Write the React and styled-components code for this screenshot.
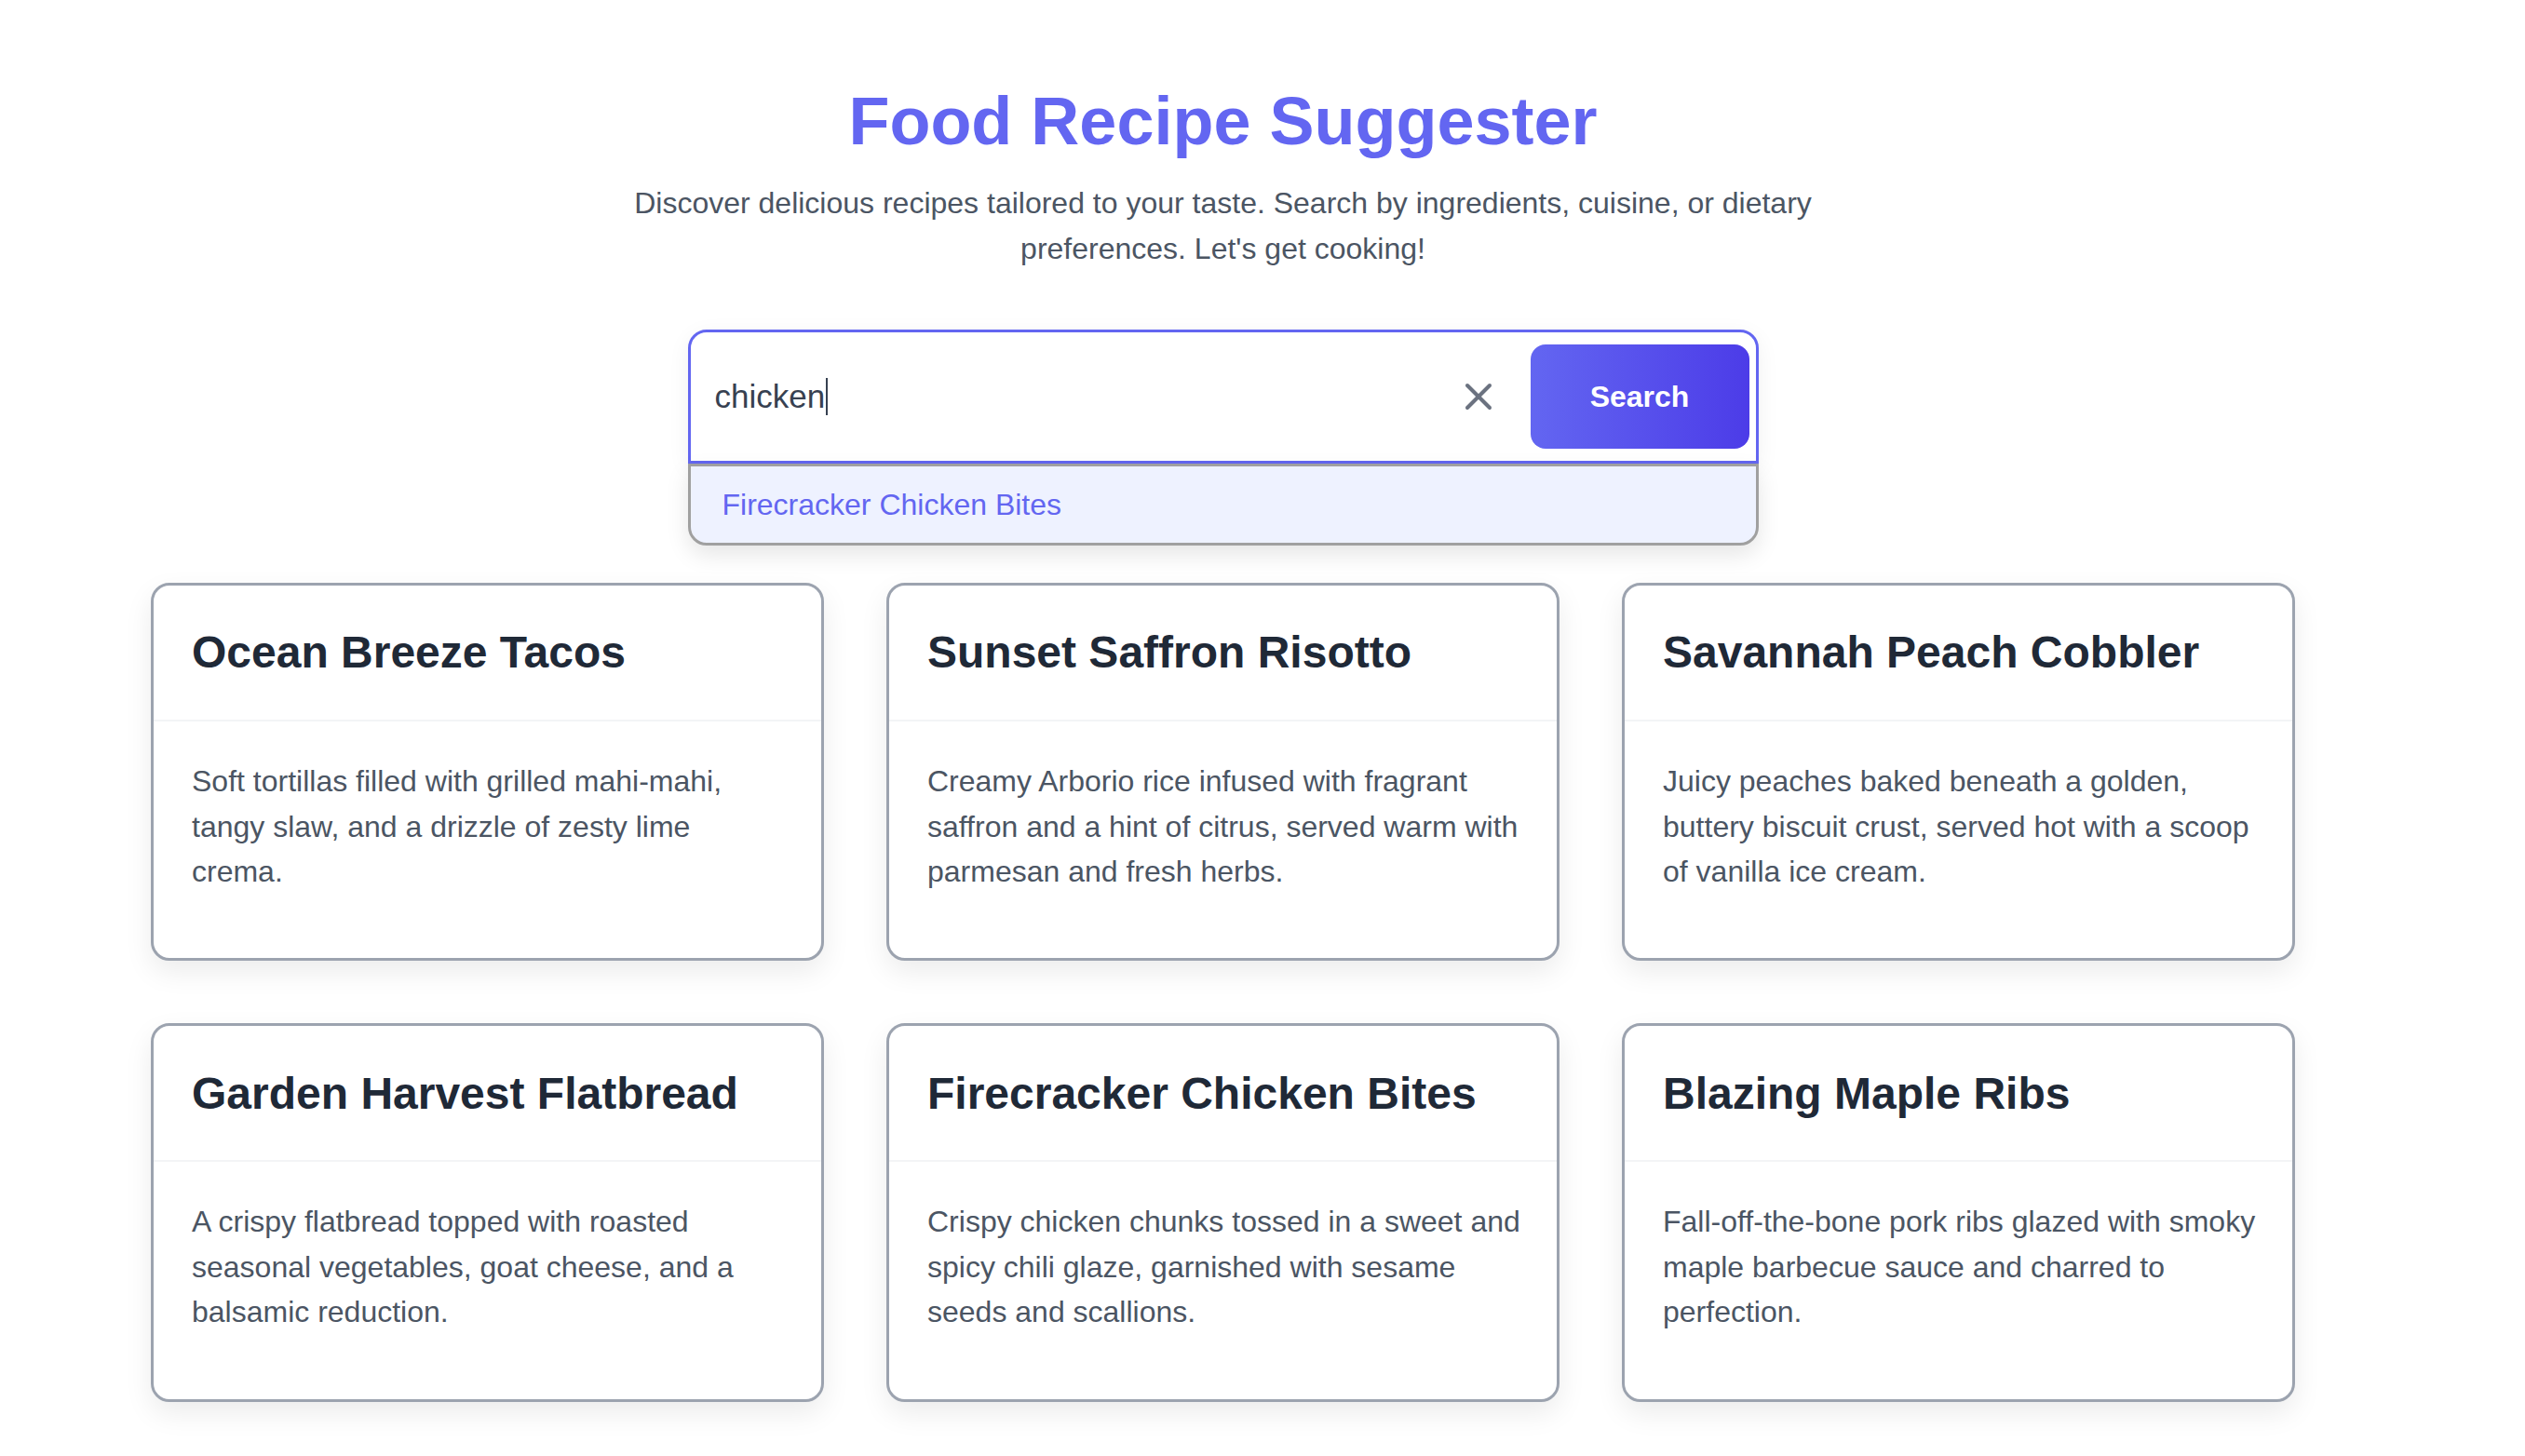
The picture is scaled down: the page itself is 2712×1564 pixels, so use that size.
import { useState } from 'react';
import styled, { createGlobalStyle } from 'styled-components';
import { X } from 'lucide-react';

const GlobalStyle = createGlobalStyle`
  * { box-sizing: border-box; }
  body {
    margin: 0;
    background: #ffffff;
    font-family: "Liberation Sans", Arial, Helvetica, sans-serif;
  }
`;

const Page = styled.main`
  max-width: 2627px;
  display: flex;
  flex-direction: column;
  align-items: center;
  padding: 87px 0 60px;
`;

const Title = styled.h1`
  margin: 0;
  font-size: 72px;
  line-height: 1.2;
  font-weight: 700;
  color: #6366f1;
  text-align: center;
`;

const Subtitle = styled.p`
  margin: 21px 0 0;
  max-width: 1300px;
  font-size: 32px;
  line-height: 48.4px;
  color: #4b5563;
  text-align: center;
`;

const SearchWrap = styled.div`
  position: relative;
  width: 1150px;
  margin: 63px 0 128px;
`;

const SearchBox = styled.div`
  display: flex;
  align-items: center;
  height: 144px;
  padding: 13px 7px 13px 26px;
  border: 3px solid #6366f1;
  border-radius: ${(p) => (p.$open ? '20px 20px 0 0' : '20px')};
  background: #ffffff;
  box-shadow: 0 6px 24px rgba(0, 0, 0, 0.06);
`;

const Field = styled.label`
  position: relative;
  flex: 1;
  min-width: 0;
  display: flex;
  align-items: center;
  height: 60px;
  cursor: text;
`;

const Input = styled.input`
  position: absolute;
  inset: 0;
  width: 100%;
  border: none;
  outline: none;
  background: transparent;
  font-family: inherit;
  font-size: 35px;
  color: transparent;
  caret-color: transparent;
  padding: 0;
`;

const Typed = styled.span`
  font-size: 35px;
  color: #374151;
  white-space: pre;
  pointer-events: none;
`;

const Caret = styled.span`
  display: inline-block;
  width: 2px;
  height: 40px;
  margin-left: 1px;
  background: #374151;
  pointer-events: none;
`;

const ClearButton = styled.button`
  display: flex;
  align-items: center;
  justify-content: center;
  padding: 0;
  margin-right: 32px;
  border: none;
  background: none;
  color: #6b7280;
  cursor: pointer;
`;

const SearchButton = styled.button`
  width: 235px;
  height: 112px;
  border: none;
  border-radius: 16px;
  background: linear-gradient(90deg, #6366f1 0%, #4c3ce8 100%);
  color: #ffffff;
  font-family: inherit;
  font-size: 32px;
  font-weight: 700;
  cursor: pointer;
`;

const Suggestions = styled.ul`
  position: absolute;
  top: 100%;
  left: 0;
  right: 0;
  margin: 0;
  padding: 0;
  list-style: none;
  background: #eef2ff;
  border: 3px solid #a0a0a0;
  border-radius: 0 0 20px 20px;
  box-shadow: 0 10px 24px rgba(0, 0, 0, 0.1);
  z-index: 2;
`;

const Suggestion = styled.li`
  display: flex;
  align-items: center;
  height: 82px;
  padding: 0 34px;
  font-size: 32px;
  color: #6366f1;
  cursor: pointer;
`;

const Grid = styled.section`
  display: grid;
  grid-template-columns: repeat(3, 723px);
  gap: 67px;
  justify-content: center;
`;

const Card = styled.article`
  background: #ffffff;
  border: 3px solid #9ca3af;
  border-radius: 20px;
  box-shadow: 0 12px 30px rgba(0, 0, 0, 0.08);
  overflow: hidden;
`;

const CardHeader = styled.div`
  height: 146px;
  display: flex;
  align-items: center;
  padding: 0 41px;
  border-bottom: 2px solid #f3f4f6;
`;

const CardTitle = styled.h2`
  margin: 0;
  font-size: 48px;
  line-height: 1.2;
  font-weight: 700;
  color: #1f2937;
`;

const CardBody = styled.p`
  margin: 0;
  padding: 40px 37px 69px 41px;
  font-size: 32px;
  line-height: 48.4px;
  color: #4b5563;
`;

const recipes = [
  {
    name: 'Ocean Breeze Tacos',
    text: 'Soft tortillas filled with grilled mahi-mahi, tangy slaw, and a drizzle of zesty lime crema.',
  },
  {
    name: 'Sunset Saffron Risotto',
    text: 'Creamy Arborio rice infused with fragrant saffron and a hint of citrus, served warm with parmesan and fresh herbs.',
  },
  {
    name: 'Savannah Peach Cobbler',
    text: 'Juicy peaches baked beneath a golden, buttery biscuit crust, served hot with a scoop of vanilla ice cream.',
  },
  {
    name: 'Garden Harvest Flatbread',
    text: 'A crispy flatbread topped with roasted seasonal vegetables, goat cheese, and a balsamic reduction.',
  },
  {
    name: 'Firecracker Chicken Bites',
    text: 'Crispy chicken chunks tossed in a sweet and spicy chili glaze, garnished with sesame seeds and scallions.',
  },
  {
    name: 'Blazing Maple Ribs',
    text: 'Fall-off-the-bone pork ribs glazed with smoky maple barbecue sauce and charred to perfection.',
  },
];

export default function App() {
  const [query, setQuery] = useState('chicken');

  const matches = query
    ? recipes.filter((r) => r.name.toLowerCase().includes(query.toLowerCase()))
    : [];

  return (
    <>
      <GlobalStyle />
      <Page>
        <Title>Food Recipe Suggester</Title>
        <Subtitle>
          Discover delicious recipes tailored to your taste. Search by ingredients,
          cuisine, or dietary preferences. Let's get cooking!
        </Subtitle>

        <SearchWrap>
          <SearchBox $open={matches.length > 0}>
            <Field>
              <Input
                value={query}
                onChange={(e) => setQuery(e.target.value)}
                aria-label="Search recipes"
              />
              <Typed>{query}</Typed>
              <Caret />
            </Field>
            {query && (
              <ClearButton onClick={() => setQuery('')} aria-label="Clear">
                <X size={48} strokeWidth={2} />
              </ClearButton>
            )}
            <SearchButton>Search</SearchButton>
          </SearchBox>
          {matches.length > 0 && (
            <Suggestions>
              {matches.map((r) => (
                <Suggestion key={r.name}>{r.name}</Suggestion>
              ))}
            </Suggestions>
          )}
        </SearchWrap>

        <Grid>
          {recipes.map((r) => (
            <Card key={r.name}>
              <CardHeader>
                <CardTitle>{r.name}</CardTitle>
              </CardHeader>
              <CardBody>{r.text}</CardBody>
            </Card>
          ))}
        </Grid>
      </Page>
    </>
  );
}
